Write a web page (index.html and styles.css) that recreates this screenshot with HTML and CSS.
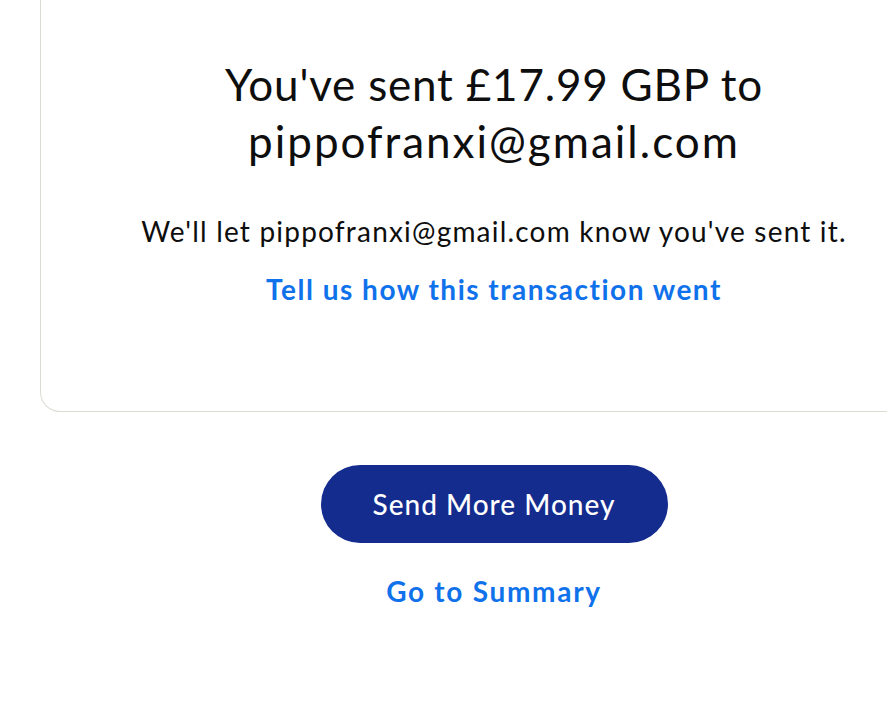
FILE: index.html
```html
<!DOCTYPE html>
<html>
<head>
<meta charset="utf-8">
<link rel="stylesheet" href="styles.css">
</head>
<body>
<div class="page">
  <section class="card">
    <h1 class="title">You've sent £17.99 GBP to<br><span class="recipient">pippofranxi@gmail.com</span></h1>
    <p class="note">We'll let pippofranxi@gmail.com know you've sent it.</p>
    <a class="link feedback" href="#">Tell us how this transaction went</a>
  </section>
  <div class="actions">
    <a class="btn-primary" href="#">Send More Money</a>
    <a class="link summary" href="#">Go to Summary</a>
  </div>
</div>
</body>
</html>
```

FILE: styles.css
```css
html, body {
  margin: 0;
  padding: 0;
  background: #ffffff;
  overflow: hidden;
}
body {
  font-family: Lato, "Open Sans", sans-serif;
  color: #0e0e0e;
}
.page {
  width: 908px;
  margin-left: 40px;
}
.card {
  box-sizing: border-box;
  height: 412px;
  border: 1px solid #dbdad3;
  border-top: none;
  border-radius: 0 0 20px 20px;
  display: flex;
  flex-direction: column;
  align-items: center;
  padding-top: 56px;
}
.title {
  margin: 0;
  font-weight: 400;
  font-size: 44px;
  line-height: 57px;
  letter-spacing: 0.8px;
  text-align: center;
}
.recipient {
  letter-spacing: 2px;
}
.note {
  margin: 43px 0 0;
  font-size: 28px;
  line-height: 36px;
  letter-spacing: 1.2px;
  text-align: center;
}
.link {
  color: #1072eb;
  font-weight: 700;
  text-decoration: none;
  font-size: 28px;
  line-height: 36px;
  letter-spacing: 1.5px;
}
.feedback {
  margin-top: 22px;
}
.actions {
  display: flex;
  flex-direction: column;
  align-items: center;
  padding-top: 53px;
}
.btn-primary {
  box-sizing: border-box;
  width: 347px;
  height: 78px;
  border-radius: 39px;
  background: #142c8e;
  color: #ffffff;
  font-size: 28px;
  font-weight: 500;
  letter-spacing: 1px;
  text-decoration: none;
  display: flex;
  align-items: center;
  justify-content: center;
}
.summary {
  margin-top: 30px;
  letter-spacing: 1.7px;
}
```
